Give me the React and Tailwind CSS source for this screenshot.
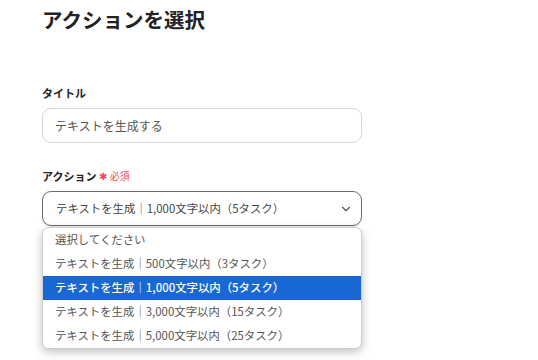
import { ChevronDown } from 'lucide-react';

const OPTIONS = [
  { label: '選択してください' },
  { label: 'テキストを生成｜500文字以内（3タスク）' },
  { label: 'テキストを生成｜1,000文字以内（5タスク）', selected: true },
  { label: 'テキストを生成｜3,000文字以内（15タスク）' },
  { label: 'テキストを生成｜5,000文字以内（25タスク）' },
];

export default function App() {
  return (
    <div className="min-h-screen bg-white font-['Noto_Sans_CJK_JP','Noto_Sans',sans-serif] text-[#222]">
      <div className="px-[42px] pt-[3px] w-[362px] box-content">
        <h1 className="text-[20.5px] font-bold leading-[32px]">アクションを選択</h1>

        {/* Title field */}
        <div className="mt-[50px]">
          <p className="text-[11px] font-bold leading-[16px]">タイトル</p>
          <div className="mt-[7px] h-[35px] w-[320px] rounded-[9px] border border-[#d4d6da] flex items-center px-[12px]">
            <span className="text-[12px] text-[#555]">テキストを生成する</span>
          </div>
        </div>

        {/* Action field */}
        <div className="mt-[25px]">
          <p className="text-[11px] font-bold leading-[16px] flex items-center gap-[3px]">
            アクション
            <span className="text-[#ef4b5b] font-normal text-[10px]">✱ 必須</span>
          </p>
          <div className="relative mt-[7px] w-[320px]">
            <div className="h-[35px] rounded-[9px] border border-[#6b6b6b] flex items-center justify-between pl-[13px] pr-[8px] shadow-[0_1px_2px_rgba(0,0,0,0.08)]">
              <span className="text-[11.4px] text-[#444]">テキストを生成｜1,000文字以内（5タスク）</span>
              <ChevronDown className="w-[14px] h-[14px] text-[#555]" strokeWidth={2} />
            </div>
            <div className="absolute left-0 top-[36px] w-[320px] bg-white rounded-[7px] border border-[#cfcfcf] shadow-[0_3px_10px_rgba(0,0,0,0.25)] overflow-hidden">
              {OPTIONS.map((o) => (
                <div
                  key={o.label}
                  className={`h-[24px] flex items-center px-[12px] text-[11.4px] ${o.selected ? 'bg-[#1967d2] text-white font-medium' : 'text-[#555]'}`}
                >
                  {o.label}
                </div>
              ))}
            </div>
          </div>
        </div>
      </div>
    </div>
  );
}
